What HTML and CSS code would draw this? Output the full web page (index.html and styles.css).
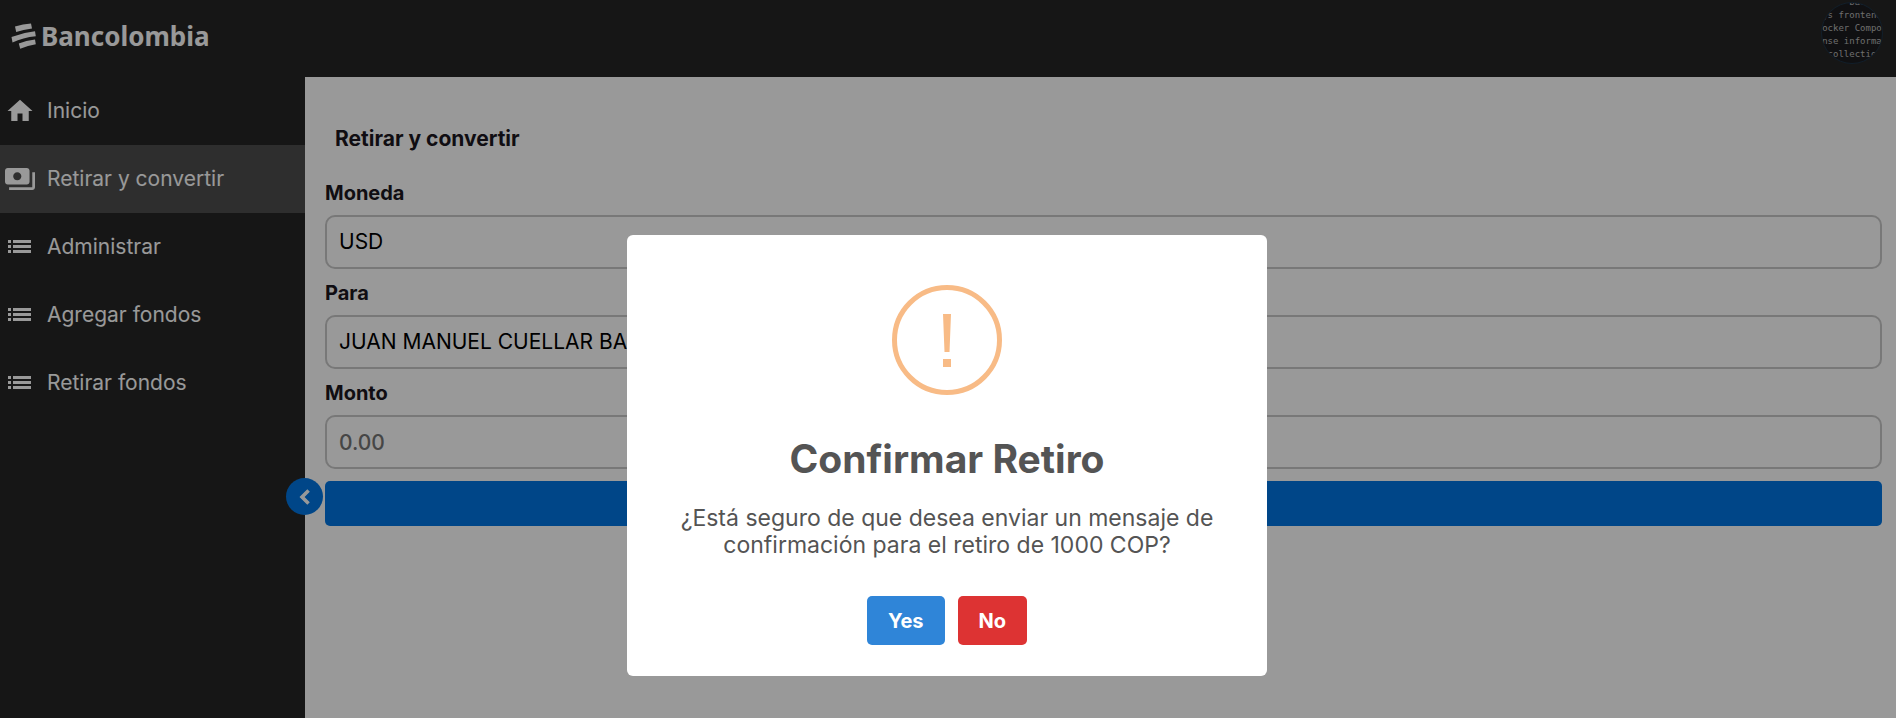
FILE: index.html
```html
<!DOCTYPE html>
<html lang="es">
<head>
<meta charset="utf-8">
<meta name="viewport" content="width=device-width, initial-scale=1">
<title>Bancolombia</title>
<link rel="stylesheet" href="styles.css">
</head>
<body>
<div class="app">
  <header class="topbar">
    <a class="brand" href="#">
      <svg class="brand-mark" viewBox="0 0 26 26" aria-hidden="true">
        <path d="M4 3.500Q12 1 20 .5L21 5.500Q12 6.500 5.200 9Z"/>
        <path d="M.5 14Q12 9.500 24 8.300L24.800 13.300Q12 14.500 1.500 19.500Z"/>
        <path d="M7.800 20.500Q15 17.500 24 16.500L24.800 21.300Q17 22.500 9.200 25.700Z"/>
      </svg>
      <span class="brand-name">Bancolombia</span>
    </a>
    <div class="avatar">
      <pre class="avatar-code">     back
js frontend
ocker Compo
nse informa
 collection</pre>
    </div>
  </header>
  <div class="body">
    <nav class="sidebar">
      <a class="nav-item" href="#">
        <svg class="nav-icon" viewBox="0 0 24 24" aria-hidden="true"><path d="M10 20v-6h4v6h5v-8h3L12 3 2 12h3v8z"/></svg>
        <span>Inicio</span>
      </a>
      <a class="nav-item active" href="#">
        <svg class="nav-icon" viewBox="1 1 22 22" aria-hidden="true"><path d="M19 14V6c0-1.100-.9-2-2-2H3c-1.100 0-2 .9-2 2v8c0 1.100.9 2 2 2h14c1.100 0 2-.9 2-2zm-9-1c-1.660 0-3-1.340-3-3s1.340-3 3-3 3 1.340 3 3-1.340 3-3 3zm13-6v11c0 1.100-.9 2-2 2H4v-2h17V7h2z"/></svg>
        <span>Retirar y convertir</span>
      </a>
      <a class="nav-item" href="#">
        <svg class="nav-icon" viewBox="0 0 30 30" aria-hidden="true"><path d="M3 8h3v3H3zM3 13h3v3H3zM3 18h3v3H3zM8 8h18v3H8zM8 13h18v3H8zM8 18h18v3H8z"/></svg>
        <span>Administrar</span>
      </a>
      <a class="nav-item" href="#">
        <svg class="nav-icon" viewBox="0 0 30 30" aria-hidden="true"><path d="M3 8h3v3H3zM3 13h3v3H3zM3 18h3v3H3zM8 8h18v3H8zM8 13h18v3H8zM8 18h18v3H8z"/></svg>
        <span>Agregar fondos</span>
      </a>
      <a class="nav-item" href="#">
        <svg class="nav-icon" viewBox="0 0 30 30" aria-hidden="true"><path d="M3 8h3v3H3zM3 13h3v3H3zM3 18h3v3H3zM8 8h18v3H8zM8 13h18v3H8zM8 18h18v3H8z"/></svg>
        <span>Retirar fondos</span>
      </a>
      <button class="collapse" type="button">
        <svg viewBox="0 0 24 24" aria-hidden="true"><path d="M15.400 7.400 14 6l-6 6 6 6 1.400-1.400L10.800 12z"/></svg>
      </button>
    </nav>
    <main class="content">
      <h1 class="title" id="title">Retirar y convertir</h1>
      <form class="form">
        <label class="label" for="moneda">Moneda</label>
        <select class="field" id="moneda"><option>USD</option></select>
        <label class="label" for="para">Para</label>
        <select class="field" id="para"><option>JUAN MANUEL CUELLAR BA</option></select>
        <label class="label" for="monto">Monto</label>
        <input class="field amount" id="monto" type="text" placeholder="0.00">
        <button class="submit" type="button" aria-labelledby="title"></button>
      </form>
    </main>
  </div>
</div>
<div class="overlay">
  <div class="dialog" role="dialog" aria-modal="true" aria-labelledby="dialog-title">
    <svg class="warning" viewBox="0 0 110 110" aria-hidden="true">
      <circle cx="55" cy="55" r="52.500"/>
      <path d="M51 29h8l-1.500 38h-5zM51 74h8v8h-8z"/>
    </svg>
    <h2 class="dialog-title" id="dialog-title">Confirmar Retiro</h2>
    <p class="dialog-text">¿Está seguro de que desea enviar un mensaje de confirmación para el retiro de 1000 COP?</p>
    <div class="actions">
      <button class="action yes" type="button">Yes</button>
      <button class="action no" type="button">No</button>
    </div>
  </div>
</div>
</body>
</html>
```
FILE: styles.css
```css
* {
  box-sizing: border-box;
}

body {
  margin: 0;
  font-family: Inter, "Open Sans", sans-serif;
  font-size: 20px;
  line-height: 24px;
  color: #1b1720;
  background: #fff;
}

button,
input,
select {
  font: inherit;
}

.app {
  display: flex;
  flex-direction: column;
  min-height: 100vh;
}

.topbar {
  display: flex;
  align-items: flex-start;
  justify-content: space-between;
  height: 77px;
  padding: 2px 13px 0 11px;
  background: #262626;
}

.brand {
  display: flex;
  align-items: center;
  gap: 4px;
  height: 68px;
  color: #fff;
  text-decoration: none;
}

.brand-mark {
  width: 26px;
  height: 26px;
  fill: #fff;
}

.brand-name {
  font-family: "Noto Sans", sans-serif;
  font-size: 26px;
  font-weight: 700;
}

.avatar {
  display: flex;
  justify-content: center;
  width: 62px;
  height: 62px;
  overflow: hidden;
  border: 1px solid #1d3347;
  border-radius: 50%;
  background: #1c1c1f;
  color: #b8b8b8;
}

.avatar-code {
  margin: 0;
  margin-top: -7px;
  font-family: "DejaVu Sans Mono", monospace;
  font-size: 9px;
  line-height: 13px;
}

.body {
  display: flex;
  flex: 1;
}

.sidebar {
  position: relative;
  flex: none;
  width: 305px;
  background: #262626;
}

.nav-item {
  display: flex;
  align-items: center;
  gap: 12px;
  height: 68px;
  padding-left: 5px;
  color: #fff;
  font-size: 21px;
  text-decoration: none;
}

.nav-item.active {
  background: #4e4e4e;
}

.nav-icon {
  width: 30px;
  height: 30px;
  fill: #fff;
}

.collapse {
  position: absolute;
  right: -18px;
  top: 401px;
  display: grid;
  place-items: center;
  width: 37px;
  height: 37px;
  padding: 0;
  border: 0;
  border-radius: 50%;
  background: #0076e3;
}

.collapse svg {
  width: 28px;
  height: 28px;
  fill: #fff;
  stroke: #fff;
}

.content {
  flex: 1;
  min-width: 0;
  padding: 50px 14px 20px 20px;
}

.title {
  margin: 0 0 30px;
  padding-left: 10px;
  font-size: 21px;
  font-weight: 700;
}

.form {
  display: flex;
  flex-direction: column;
}

.label {
  margin-bottom: 10px;
  font-weight: 700;
}

.field {
  width: 100%;
  height: 54px;
  margin-bottom: 12px;
  padding: 0 12px;
  border: 2px solid #c8c8c8;
  border-radius: 10px;
  appearance: none;
  background: #fff;
  color: #000;
  font-size: 21px;
}

.amount {
  font-weight: 500;
}

.amount::placeholder {
  color: #757575;
}

.submit {
  height: 45px;
  border: 0;
  border-radius: 5px;
  background: #0076e3;
}

.overlay {
  position: fixed;
  inset: 0;
  display: grid;
  place-items: center;
  padding: 193px 2px 0 0;
  background: rgba(0, 0, 0, 0.4);
}

.dialog {
  display: flex;
  flex-direction: column;
  align-items: center;
  width: 640px;
  max-width: 100%;
  padding: 50px 40px 31px;
  border-radius: 6px;
  background: #fff;
  color: #545454;
  text-align: center;
}

.warning {
  width: 110px;
  height: 110px;
  fill: #f8bb86;
}

.warning circle {
  fill: none;
  stroke: #f8bb86;
  stroke-width: 5px;
}

.dialog-title {
  margin: 40px 0 22px;
  font-size: 39px;
  line-height: 48px;
  font-weight: 700;
}

.dialog-text {
  margin: 0 0 37px;
  font-size: 23px;
  line-height: 27px;
}

.actions {
  display: flex;
  gap: 13px;
}

.action {
  height: 49px;
  padding: 0 21px;
  border: 0;
  border-radius: 5px;
  color: #fff;
  font-weight: 700;
}

.yes {
  background: #2f85d8;
}

.no {
  background: #dd3333;
}
```
